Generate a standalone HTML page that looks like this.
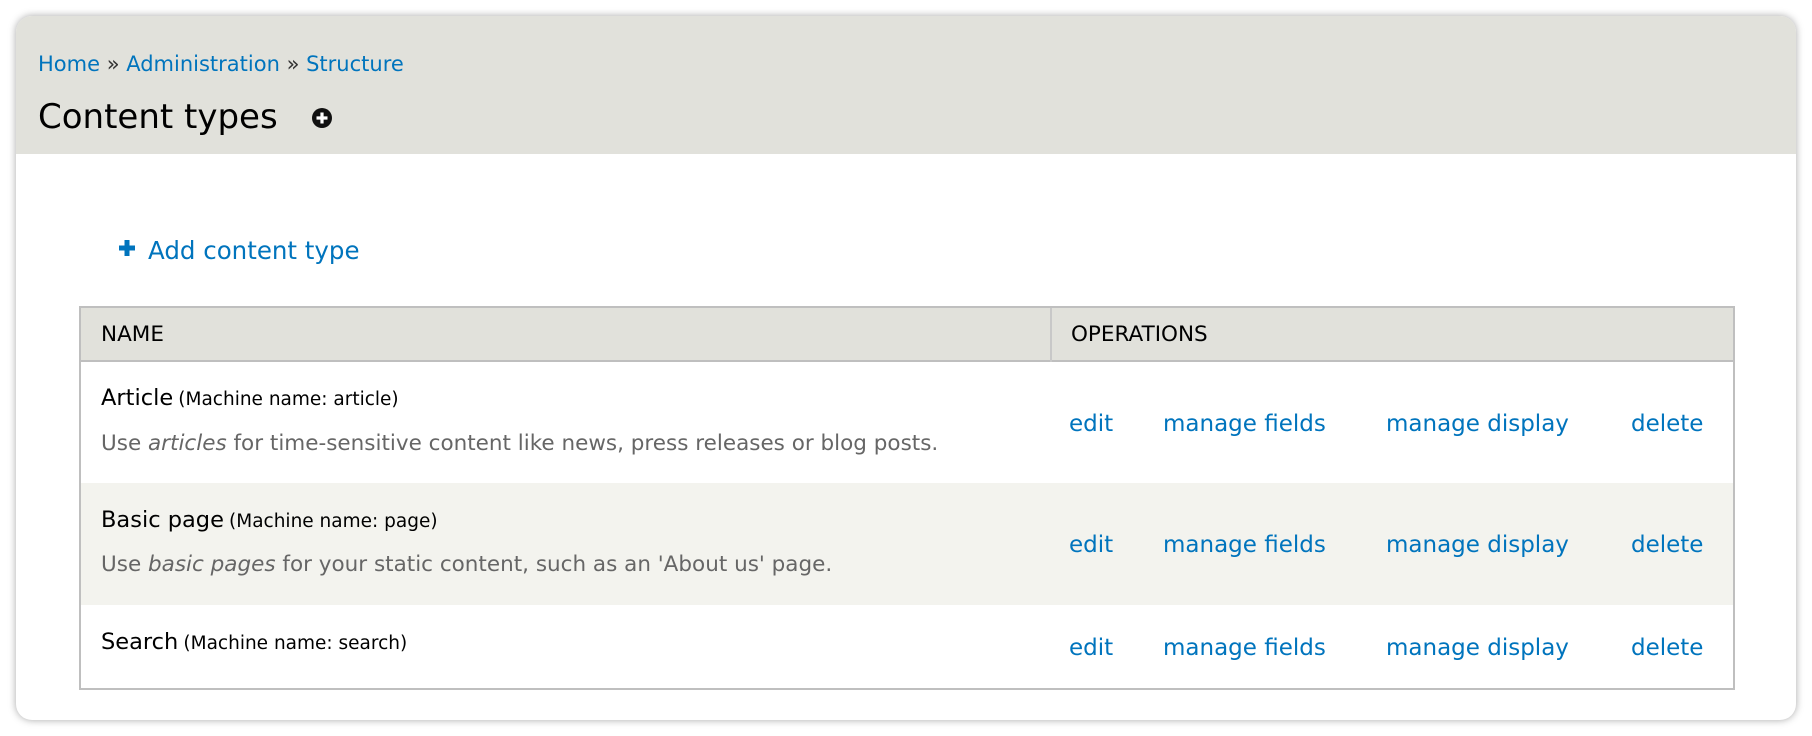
<!DOCTYPE html>
<html><head><meta charset="utf-8"><style>
*{margin:0;padding:0;box-sizing:border-box}
body{width:1812px;height:736px;background:#fff;font-family:"DejaVu Sans","Liberation Sans",sans-serif;position:relative;overflow:hidden}
.card{position:absolute;left:16px;top:16px;width:1780px;height:704px;border-radius:16px;background:#fff;box-shadow:0 0 8px rgba(0,0,0,.35);overflow:hidden}
.hdr{position:absolute;left:0;top:0;width:100%;height:138px;background:#e1e1db}
a,.l{color:#0074bd;text-decoration:none}
.abs{position:absolute;white-space:nowrap}
.tbl{position:absolute;left:63px;top:290px;width:1656px;height:384px;border:2px solid #bfbfbf}
.th{position:absolute;left:0;top:0;width:100%;height:54px;background:#e1e1db;border-bottom:2px solid #bfbfbf}
.div{position:absolute;left:969px;top:0;width:2px;height:54px;background:#c8c8c8}
.r2{position:absolute;left:0;top:175px;width:100%;height:122px;background:#f3f3ee}
.t{font-size:22.5px;color:#000}
.op{font-size:23px;color:#0074bd}
.m{font-size:18.5px;color:#000}
.d{font-size:21.5px;color:#666}
</style></head><body>
<div class="card">
<div class="hdr"></div>
<div class="abs l" style="left:22px;top:36px;font-size:21px"><span class="l">Home</span><span style="color:#333"> » </span><span class="l">Administration</span><span style="color:#333"> » </span><span class="l">Structure</span></div>
<div class="abs" style="left:22px;top:81px;font-size:34px;color:#000">Content types</div>
<svg class="abs" style="left:295px;top:91px" width="22" height="22" viewBox="0 0 22 22"><circle cx="11" cy="11" r="10" fill="#111"/><path d="M11 5.5v11M5.5 11h11" stroke="#fff" stroke-width="3.2"/></svg>
<svg class="abs" style="left:102px;top:223px" width="18" height="18" viewBox="0 0 18 18"><path d="M9 1v16M1 9h16" stroke="#0074bd" stroke-width="5"/></svg>
<div class="abs l" style="left:132px;top:220px;font-size:24.5px">Add content type</div>
<div class="tbl">
<div class="th"><div class="div"></div>
<div class="abs t" style="left:20px;top:14px;font-size:21.5px">NAME</div>
<div class="abs t" style="left:990px;top:14px;font-size:21.5px">OPERATIONS</div></div>
<div class="r2"></div>
<div class="abs" style="left:20px;top:77px"><span class="t">Article</span> <span class="m">(Machine name: article)</span></div>
<div class="abs d" style="left:20px;top:123px">Use <i>articles</i> for time-sensitive content like news, press releases or blog posts.</div>
<div class="abs" style="left:20px;top:199px"><span class="t">Basic page</span> <span class="m">(Machine name: page)</span></div>
<div class="abs d" style="left:20px;top:244px">Use <i>basic pages</i> for your static content, such as an 'About us' page.</div>
<div class="abs" style="left:20px;top:321px"><span class="t">Search</span> <span class="m">(Machine name: search)</span></div>
<div class="abs op" style="left:988px;top:103px">edit</div><div class="abs op" style="left:1082px;top:103px">manage fields</div><div class="abs op" style="left:1305px;top:103px">manage display</div><div class="abs op" style="left:1550px;top:103px">delete</div>
<div class="abs op" style="left:988px;top:224px">edit</div><div class="abs op" style="left:1082px;top:224px">manage fields</div><div class="abs op" style="left:1305px;top:224px">manage display</div><div class="abs op" style="left:1550px;top:224px">delete</div>
<div class="abs op" style="left:988px;top:327px">edit</div><div class="abs op" style="left:1082px;top:327px">manage fields</div><div class="abs op" style="left:1305px;top:327px">manage display</div><div class="abs op" style="left:1550px;top:327px">delete</div>
</div>
</div>
</body></html>
